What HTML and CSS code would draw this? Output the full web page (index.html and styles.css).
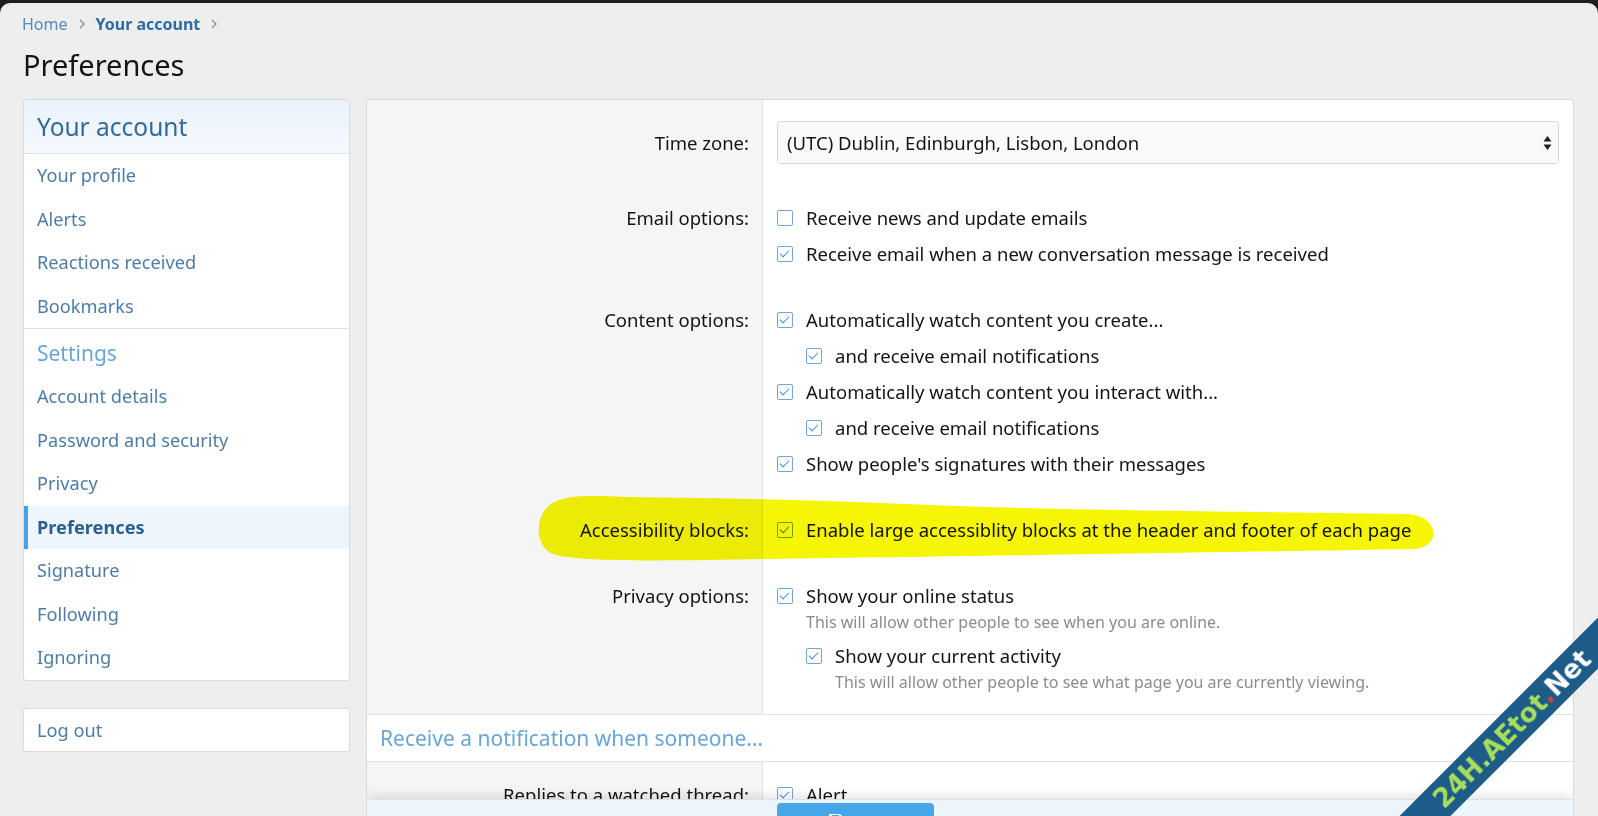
FILE: index.html
```html
<!DOCTYPE html>
<html>
<head>
    <title>Preferences</title>
    <link rel="stylesheet" href="styles.css">
</head>
<body>
<div class="page">
    <div class="breadcrumbs">
        <a class="crumb">Home</a>
        <svg class="crumb-sep" width="6" height="10" viewBox="0 0 6 10"><path d="M1 1 L5 5 L1 9" fill="none" stroke="#8f8f8f" stroke-width="1.3"/></svg>
        <a class="crumb current">Your account</a>
        <svg class="crumb-sep" width="6" height="10" viewBox="0 0 6 10"><path d="M1 1 L5 5 L1 9" fill="none" stroke="#8f8f8f" stroke-width="1.3"/></svg>
    </div>
    <h1 class="title">Preferences</h1>

    <div class="layout">
        <!-- Account navigation -->
        <aside class="sidebar">
            <div class="block">
                <h3 class="block-header">Your account</h3>
                <div class="nav-list">
                    <a class="nav-link">Your profile</a>
                    <a class="nav-link">Alerts</a>
                    <a class="nav-link">Reactions received</a>
                    <a class="nav-link">Bookmarks</a>
                </div>
                <h3 class="nav-minor">Settings</h3>
                <div class="nav-list">
                    <a class="nav-link">Account details</a>
                    <a class="nav-link">Password and security</a>
                    <a class="nav-link">Privacy</a>
                    <a class="nav-link selected">Preferences</a>
                    <a class="nav-link">Signature</a>
                    <a class="nav-link">Following</a>
                    <a class="nav-link">Ignoring</a>
                </div>
            </div>
            <div class="block">
                <a class="nav-link">Log out</a>
            </div>
        </aside>

        <!-- Preferences form -->
        <main class="block main">
            <div class="form-body">
                <div class="form-row row-select">
                    <div class="row-label">Time zone:</div>
                    <div class="row-input">
                        <div class="select">
                            <span>(UTC) Dublin, Edinburgh, Lisbon, London</span>
                            <svg width="9" height="16" viewBox="0 0 9 16"><path d="M4.5 1 L8.5 6.5 H0.5 Z M4.5 15 L0.5 9.5 H8.5 Z" fill="#1f1f1f"/></svg>
                        </div>
                    </div>
                </div>

                <div class="form-row">
                    <div class="row-label">Email options:</div>
                    <div class="row-input">
                        <div class="check"><span class="box"></span>Receive news and update emails</div>
                        <div class="check"><span class="box on"></span>Receive email when a new conversation message is received</div>
                    </div>
                </div>

                <div class="form-row">
                    <div class="row-label">Content options:</div>
                    <div class="row-input">
                        <div class="check"><span class="box on"></span>Automatically watch content you create...</div>
                        <div class="check indent"><span class="box on"></span>and receive email notifications</div>
                        <div class="check"><span class="box on"></span>Automatically watch content you interact with...</div>
                        <div class="check indent"><span class="box on"></span>and receive email notifications</div>
                        <div class="check"><span class="box on"></span>Show people's signatures with their messages</div>
                    </div>
                </div>

                <div class="form-row marked">
                    <div class="row-label">Accessibility blocks:</div>
                    <div class="row-input">
                        <div class="check"><span class="box on"></span>Enable large accessiblity blocks at the header and footer of each page</div>
                    </div>
                    <svg class="marker" width="902" height="66" viewBox="0 0 902 66"><path d="M26 3 C40 -1 60 0 90 1 C200 2 300 5 420 10 C600 16 780 16 872 18 C902 21 905 50 878 53 C700 56 450 60 230 63 C120 65 42 66 16 58 C-5 50 -4 9 26 3 Z" fill="#f6f505"/></svg>
                </div>

                <div class="form-row">
                    <div class="row-label">Privacy options:</div>
                    <div class="row-input">
                        <div class="check"><span class="box on"></span>Show your online status</div>
                        <div class="hint">This will allow other people to see when you are online.</div>
                        <div class="check indent"><span class="box on"></span>Show your current activity</div>
                        <div class="hint indent">This will allow other people to see what page you are currently viewing.</div>
                    </div>
                </div>
            </div>

            <h3 class="minor-header">Receive a notification when someone...</h3>

            <div class="form-body">
                <div class="form-row">
                    <div class="row-label">Replies to a watched thread:</div>
                    <div class="row-input">
                        <div class="check"><span class="box on"></span>Alert</div>
                    </div>
                </div>
            </div>

            <div class="form-submit">
                <div class="button">
                    <svg width="16" height="16" viewBox="0 0 16 16"><path d="M1 1 H12 L15 4 V15 H1 Z" fill="#fff"/><rect x="4" y="2" width="7" height="4" fill="#47a6ea"/></svg>
                </div>
            </div>
        </main>
    </div>

    <div class="ribbon">24H.AEtot<span class="dot">.</span><span class="net">Net</span></div>
</div>
</body>
</html>
```

FILE: styles.css
```css
* {
    box-sizing: border-box;
}
html {
    overflow: hidden;
}
body {
    margin: 0;
    background: #1e1e1e;
    font-family: "Noto Sans", "Open Sans", sans-serif;
    color: #141414;
}
.page {
    position: relative;
    margin-top: 3px;
    height: 813px;
    padding: 0 24px 0 23px;
    background: #eeeeee;
    border-radius: 10px 10px 0 0;
}
.breadcrumbs {
    display: flex;
    align-items: center;
    gap: 11px;
    height: 41px;
    margin-left: -1px;
    font-size: 16px;
}
.crumb {
    color: #5a8ab5;
}
.crumb.current {
    color: #2c6ba3;
    font-weight: bold;
}
.title {
    margin: 0;
    font-size: 29px;
    font-weight: normal;
    line-height: 42px;
    color: #141414;
}
.layout {
    display: flex;
    align-items: flex-start;
    gap: 16px;
    margin-top: 13px;
}
.block {
    background: #fff;
    border: 1px solid #dadada;
    border-radius: 3px;
}
.sidebar {
    width: 327px;
    flex: none;
    display: flex;
    flex-direction: column;
    gap: 27px;
}
.block-header {
    margin: 0;
    height: 54px;
    display: flex;
    align-items: center;
    padding: 0 13px;
    font-size: 24.5px;
    font-weight: normal;
    color: #336a98;
    background: linear-gradient(#e9f2fb, #f5f9fd);
    border-bottom: 1px solid #dce5ee;
}
.nav-minor {
    margin: 0;
    height: 47px;
    display: flex;
    align-items: center;
    padding: 2px 13px 0;
    font-size: 21px;
    font-weight: normal;
    color: #6aa5d8;
    border-top: 1px solid #e3e3e3;
}
.nav-link {
    display: block;
    height: 43.5px;
    line-height: 43px;
    padding: 0 13px;
    font-size: 18.2px;
    color: #4d7ca5;
}
.block > .nav-link {
    height: 42px;
    line-height: 42px;
}
.nav-link.selected {
    background: #edf5fd;
    box-shadow: inset 4px 0 #4a9ee4;
    color: #2a5f8f;
    font-weight: bold;
}
.main {
    flex: 1;
    min-width: 0;
    align-self: stretch;
    overflow: hidden;
    border-bottom: none;
    border-radius: 3px 3px 0 0;
}
.form-body {
    border-bottom: 1px solid #e0e0e0;
}
.form-row {
    display: flex;
}
.row-label {
    width: 396px;
    flex: none;
    padding: 21px 13px 21px 0;
    background: #f5f5f5;
    border-right: 1px solid #e3e3e3;
    text-align: right;
    font-size: 18.5px;
    line-height: 24px;
}
.row-input {
    flex: 1;
    padding: 21px 14px;
    font-size: 18.5px;
    line-height: 24px;
}
.row-select .row-label {
    line-height: 43px;
}
.select {
    height: 43px;
    display: flex;
    align-items: center;
    justify-content: space-between;
    padding: 0 6px 0 9px;
    background: #f8fafc;
    border: 1px solid #d6d9dc;
    border-radius: 4px;
}
.check {
    display: flex;
    align-items: center;
    gap: 13px;
}
.check + .check {
    margin-top: 12px;
}
.hint + .check {
    margin-top: 11px;
}
.check.indent {
    margin-left: 29px;
}
.box {
    position: relative;
    width: 16px;
    height: 16px;
    flex: none;
    background: #fff;
    border: 1.5px solid #72a5d3;
    border-radius: 2px;
}
.box.on::after {
    content: "";
    position: absolute;
    left: 4px;
    top: 1px;
    width: 4px;
    height: 8px;
    border-right: 1.6px solid #4a8ccb;
    border-bottom: 1.6px solid #4a8ccb;
    transform: rotate(45deg);
}
.hint {
    margin: 3px 0 0 29px;
    font-size: 16px;
    line-height: 22px;
    color: #8c8c8c;
}
.hint.indent {
    margin-left: 58px;
}
.marked {
    position: relative;
}
.marker {
    position: absolute;
    left: 170px;
    top: -1px;
    mix-blend-mode: multiply;
    pointer-events: none;
}
.minor-header {
    margin: 0;
    height: 47px;
    display: flex;
    align-items: center;
    padding: 0 13px;
    font-size: 21px;
    font-weight: normal;
    color: #6aa5d8;
    border-bottom: 1px solid #e0e0e0;
}
.form-submit {
    position: relative;
    margin-top: -30px;
    height: 40px;
    padding: 3px 0 0 410px;
    background: #edf5fc;
    border-top: 1px solid #d5e3f0;
    box-shadow: 0 -4px 10px rgba(0, 0, 0, 0.1);
}
.button {
    display: flex;
    justify-content: center;
    width: 157px;
    height: 40px;
    padding: 10px 40px 0 0;
    background: #47a6ea;
    border-radius: 4px;
}
.ribbon {
    position: absolute;
    left: 1302px;
    top: 708px;
    width: 420px;
    height: 36px;
    background: #1d5b89;
    color: #a6de5c;
    font-family: "DejaVu Sans", sans-serif;
    font-weight: bold;
    font-size: 26px;
    line-height: 36px;
    text-align: center;
    transform: rotate(-45deg);
}
.ribbon .dot {
    color: #e53935;
}
.ribbon .net {
    color: #fff;
}
```
